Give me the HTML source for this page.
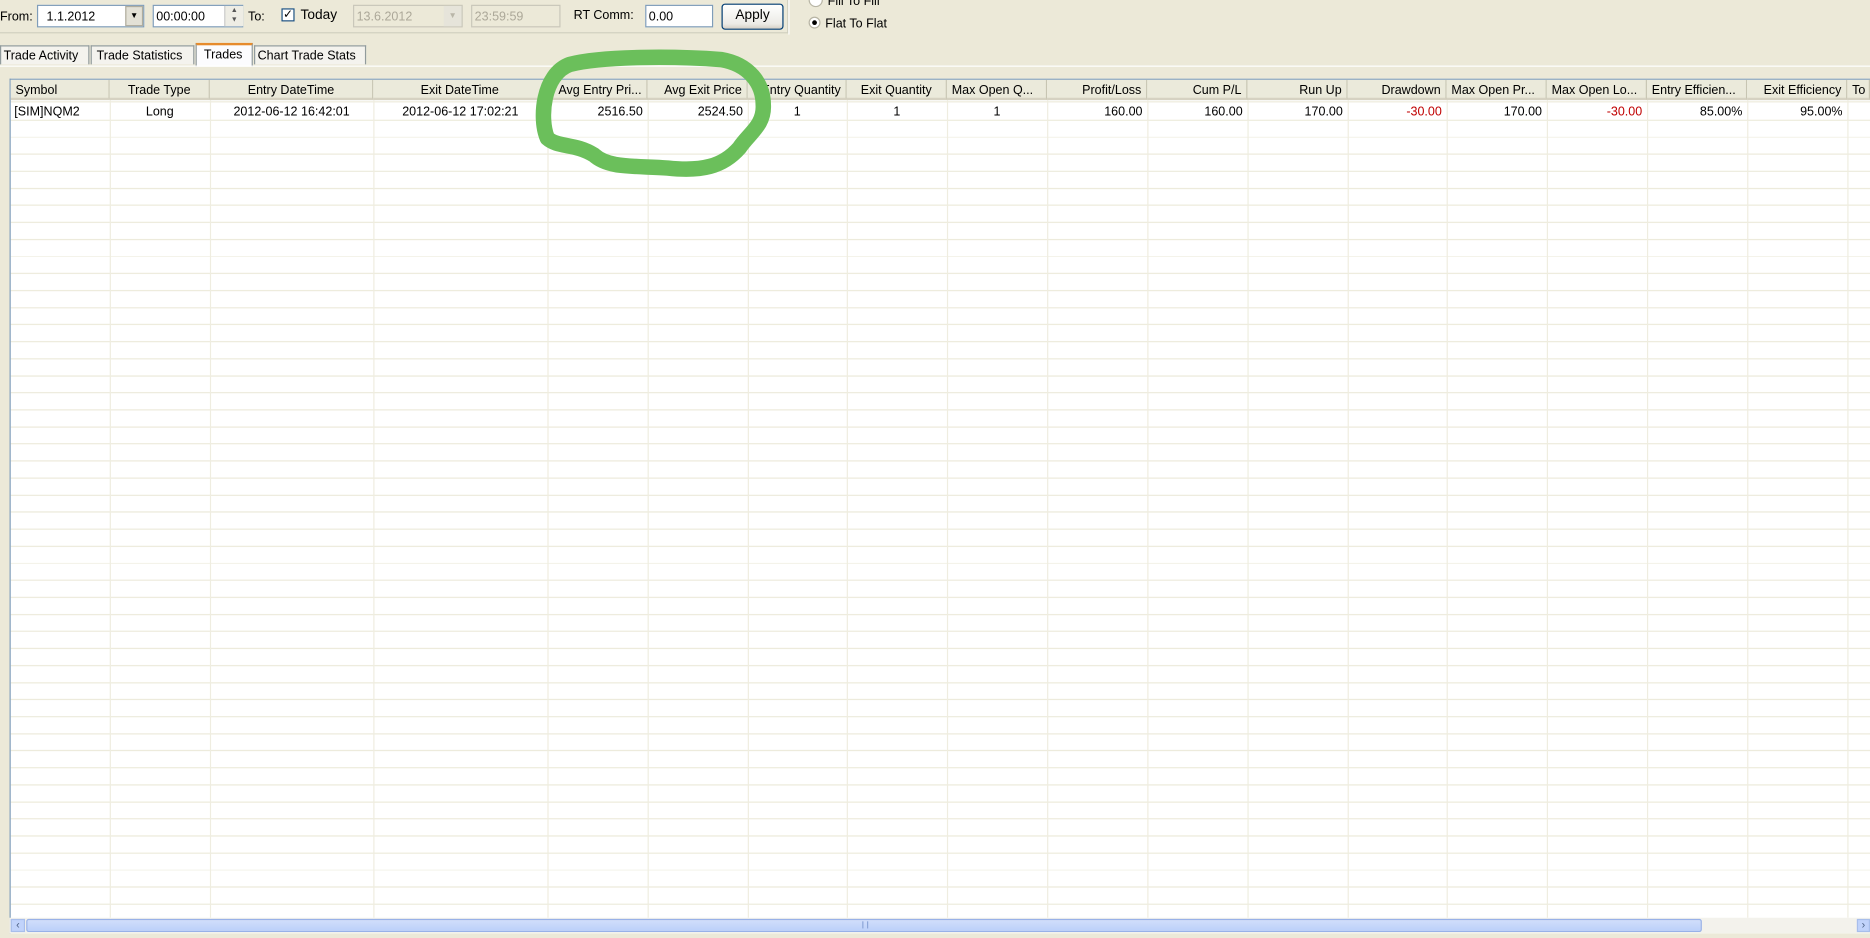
<!DOCTYPE html>
<html><head><meta charset="utf-8"><style>
body{margin:0;width:1870px;height:938px;overflow:hidden;background:#ECE9D8;font-family:"Liberation Sans",sans-serif;}
#w{position:absolute;left:0;top:0;width:1568px;height:787px;transform:scale(1.19260,1.19187);transform-origin:0 0;font-size:10.5px;color:#000;}
.a{position:absolute;white-space:nowrap;}
.box{position:absolute;background:#fff;border:1px solid #7F9DB9;box-sizing:border-box;}
.dis{background:#ECE9D8;color:#ACA899;border-color:#C9C7BA;}
.tab{position:absolute;top:38px;height:16px;border:1px solid #919B9C;border-bottom:none;background:#F4F3EE;box-sizing:border-box;padding:2px 2px;white-space:nowrap;}
.hd{position:absolute;top:67px;height:17px;background:#EBEADB;border-right:1px solid #C7C5B2;border-bottom:2px solid #D6D2C2;box-sizing:border-box;padding:3px 4px;line-height:13px;white-space:nowrap;overflow:hidden;}
.c{position:absolute;top:88px;line-height:12px;white-space:nowrap;}
.vl{position:absolute;top:84px;width:1px;height:686px;background:#EFEDE0;}
</style></head><body><div id="w">
<div class="a" style="left:0;top:8px">From:</div>
<div class="box" style="left:31px;top:4px;width:90px;height:19px;padding:3px 0 0 7px">1.1.2012</div>
<div class="a" style="left:105px;top:5px;width:15px;height:17px;background:#E3E1D6;border:1px solid #B0AD9E;box-sizing:border-box;font-size:7px;text-align:center;line-height:15px">▼</div>
<div class="box" style="left:128px;top:4px;width:76px;height:19px;padding:3px 0 0 2px">00:00:00</div>
<div class="a" style="left:188px;top:5px;width:15px;height:17px;background:#EEEDE5;border-left:1px solid #ccc;font-size:6px;line-height:8px;text-align:center;color:#555">▲<br>▼</div>
<div class="a" style="left:208px;top:8px">To:</div>
<div class="a" style="left:236px;top:7px;width:11px;height:11px;border:1px solid #1C5180;background:#fff;box-sizing:border-box;font-size:10px;line-height:9px;text-align:center">✓</div>
<div class="a" style="left:252px;top:7px;font-size:11.5px">Today</div>
<div class="box dis" style="left:296px;top:4px;width:92px;height:19px;padding:3px 0 0 2px">13.6.2012</div>
<div class="a" style="left:372px;top:5px;width:15px;height:17px;background:#E6E4DA;color:#B9B6A8;font-size:7px;text-align:center;line-height:17px">▼</div>
<div class="box dis" style="left:395px;top:4px;width:75px;height:19px;padding:3px 0 0 2px">23:59:59</div>
<div class="a" style="left:481px;top:7px">RT Comm:</div>
<div class="box" style="left:541px;top:4px;width:57px;height:19px;padding:3px 0 0 2px">0.00</div>
<div class="a" style="left:605px;top:3px;width:52px;height:22px;border:1px solid #003C74;border-radius:3px;background:linear-gradient(#fff,#ECEBE6 80%,#D6D0C5);box-sizing:border-box;text-align:center;line-height:19px;font-size:11.5px">Apply</div>
<div class="a" style="left:0;top:27px;width:661px;height:1px;background:#D0D0BF"></div>
<div class="a" style="left:660px;top:0;width:1px;height:28px;background:#D0D0BF"></div>
<div class="a" style="left:661px;top:0;width:1px;height:29px;background:#fff"></div>
<div class="a" style="left:678px;top:-6px;width:10px;height:10px;border:1px solid #B8B5A5;border-radius:50%;background:#fff"></div>
<div class="a" style="left:694px;top:-5px">Fill To Fill</div>
<div class="a" style="left:678px;top:14px;width:10px;height:10px;border:1px solid #B8B5A5;border-radius:50%;background:#fff;box-sizing:border-box"><div style="position:absolute;left:3px;top:3px;width:4px;height:4px;border-radius:50%;background:#000;margin:-1px"></div></div>
<div class="a" style="left:692px;top:14px">Flat To Flat</div>
<div class="tab" style="left:0;width:75px">Trade Activity</div>
<div class="tab" style="left:76px;width:87px;padding-left:4px">Trade Statistics</div>
<div class="tab" style="left:164px;top:36px;width:48px;height:20px;background:#FCFCFE;padding-left:6px;border-top:2px solid #E68B2C">Trades</div>
<div class="tab" style="left:213px;width:94px">Chart Trade Stats</div>
<div class="a" style="left:0;top:55px;width:1568px;height:1px;background:#fff"></div>
<div class="a" style="left:8px;top:66px;width:1560px;height:716px;background:#fff;border-top:1px solid #7F9DB9;border-left:1px solid #7F9DB9;background-image:repeating-linear-gradient(#fff 0,#fff 13.3px,#EDEBDC 13.3px,#EDEBDC 14.3px);background-position:0 20px;"></div>
<div class="hd" style="left:9px;width:83px">Symbol</div>
<div class="hd" style="left:92px;width:84px;text-align:center">Trade Type</div>
<div class="hd" style="left:176px;width:137px;text-align:center">Entry DateTime</div>
<div class="hd" style="left:313px;width:146px;text-align:center">Exit DateTime</div>
<div class="hd" style="left:459px;width:84px;text-align:right">Avg Entry Pri...</div>
<div class="hd" style="left:543px;width:84px;text-align:right">Avg Exit Price</div>
<div class="hd" style="left:627px;width:83px;text-align:right">Entry Quantity</div>
<div class="hd" style="left:710px;width:84px;text-align:center">Exit Quantity</div>
<div class="hd" style="left:794px;width:84px">Max Open Q...</div>
<div class="hd" style="left:878px;width:84px;text-align:right">Profit/Loss</div>
<div class="hd" style="left:962px;width:84px;text-align:right">Cum P/L</div>
<div class="hd" style="left:1046px;width:84px;text-align:right">Run Up</div>
<div class="hd" style="left:1130px;width:83px;text-align:right">Drawdown</div>
<div class="hd" style="left:1213px;width:84px">Max Open Pr...</div>
<div class="hd" style="left:1297px;width:84px">Max Open Lo...</div>
<div class="hd" style="left:1381px;width:84px">Entry Efficien...</div>
<div class="hd" style="left:1465px;width:84px;text-align:right">Exit Efficiency</div>
<div class="hd" style="left:1549px;width:19px">To</div>
<div class="vl" style="left:92px"></div><div class="vl" style="left:176px"></div><div class="vl" style="left:313px"></div><div class="vl" style="left:459px"></div><div class="vl" style="left:543px"></div><div class="vl" style="left:627px"></div><div class="vl" style="left:710px"></div><div class="vl" style="left:794px"></div><div class="vl" style="left:878px"></div><div class="vl" style="left:962px"></div><div class="vl" style="left:1046px"></div><div class="vl" style="left:1130px"></div><div class="vl" style="left:1213px"></div><div class="vl" style="left:1297px"></div><div class="vl" style="left:1381px"></div><div class="vl" style="left:1465px"></div><div class="vl" style="left:1549px"></div>
<div class="c" style="left:12px">[SIM]NQM2</div>
<div class="c" style="left:92px;width:84px;text-align:center">Long</div>
<div class="c" style="left:176px;width:137px;text-align:center">2012-06-12 16:42:01</div>
<div class="c" style="left:313px;width:146px;text-align:center">2012-06-12 17:02:21</div>
<div class="c" style="left:459px;width:80px;text-align:right">2516.50</div>
<div class="c" style="left:543px;width:80px;text-align:right">2524.50</div>
<div class="c" style="left:627px;width:83px;text-align:center">1</div>
<div class="c" style="left:710px;width:84px;text-align:center">1</div>
<div class="c" style="left:794px;width:84px;text-align:center">1</div>
<div class="c" style="left:878px;width:80px;text-align:right">160.00</div>
<div class="c" style="left:962px;width:80px;text-align:right">160.00</div>
<div class="c" style="left:1046px;width:80px;text-align:right">170.00</div>
<div class="c" style="left:1130px;width:79px;text-align:right;color:#C00000">-30.00</div>
<div class="c" style="left:1213px;width:80px;text-align:right">170.00</div>
<div class="c" style="left:1297px;width:80px;text-align:right;color:#C00000">-30.00</div>
<div class="c" style="left:1381px;width:80px;text-align:right">85.00%</div>
<div class="c" style="left:1465px;width:80px;text-align:right">95.00%</div>
<div class="a" style="left:8px;top:770px;width:1560px;height:13px;background:#F3F2EC"></div>
<div class="a" style="left:9px;top:771px;width:12px;height:11px;background:#C1D3FB;border:1px solid #A8BEEB;box-sizing:border-box;font-size:9px;line-height:9px;text-align:center;color:#4D6185">‹</div>
<div class="a" style="left:22px;top:771px;width:1405px;height:11px;background:linear-gradient(#D0DEFB,#BCD0FA);border:1px solid #98B1E8;border-radius:2px;box-sizing:border-box"></div>
<div class="a" style="left:723px;top:773px;width:3px;height:6px;border-left:1px solid #8CA5D8;border-right:1px solid #8CA5D8"></div>
<div class="a" style="left:1557px;top:771px;width:11px;height:11px;background:#C1D3FB;border:1px solid #A8BEEB;box-sizing:border-box;font-size:9px;line-height:9px;text-align:center;color:#4D6185">›</div>
<svg class="a" style="left:0;top:0" width="1568" height="787"><path d="M478 54 C505 47,565 47,605 50 C628 54,640 70,640 88 C641 105,628 112,620 124 C606 140,588 144,560 141 C530 139,510 141,498 130 C482 120,468 124,459 116 C452 100,455 62,478 54 Z" fill="none" stroke="#6BBF5B" stroke-width="13" stroke-linejoin="round"/></svg>
</div></body></html>
